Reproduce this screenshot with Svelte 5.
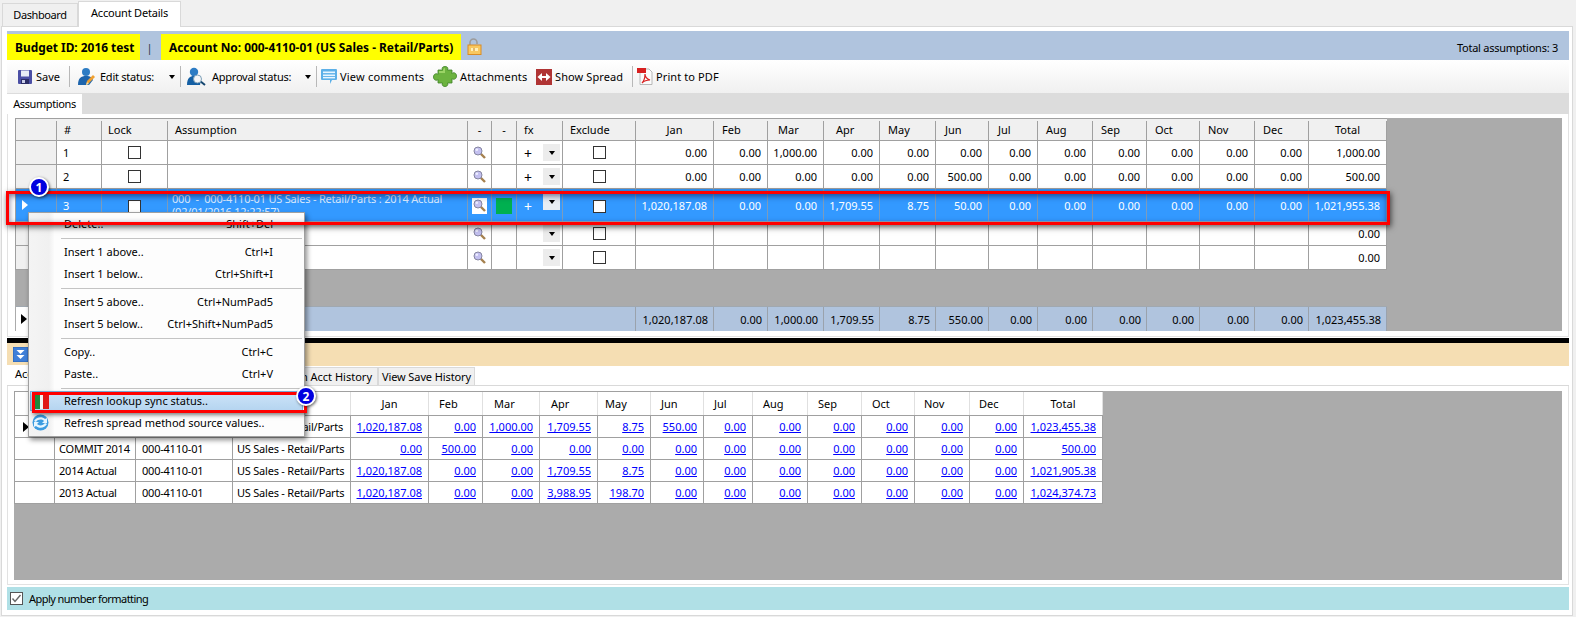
<script>
  const topCols = [41,45,66,300,24,25,46,73,78,54,56,56,56,53,49,55,54,53,55,54,78];
  const topTpl = topCols.map((w) => w + 'px').join(' ');
  const lowCols = [40,81,97,118,78,54,57,58,53,53,49,55,54,53,55,54,79];
  const lowTpl = lowCols.map((w) => w + 'px').join(' ');
  const months = [['Jan','c'],['Feb',''],['Mar','p10'],['Apr','p12'],['May',''],['Jun','p9'],['Jul','p9'],['Aug',''],['Sep',''],['Oct',''],['Nov',''],['Dec',''],['Total','c']];
  const lowMonths = [['Jan','c'],['Feb','p10'],['Mar','p11'],['Apr','p11'],['May','p7'],['Jun','p10'],['Jul','p10'],['Aug','p10'],['Sep','p10'],['Oct','p10'],['Nov','p9'],['Dec','p9'],['Total','c']];
  const z = (n) => Array(n).fill('0.00');
  const rows = [
    { n:'1', fx:true, vals:['0.00','0.00','1,000.00','0.00','0.00','0.00',...z(6),'1,000.00'] },
    { n:'2', fx:true, vals:['0.00','0.00','0.00','0.00','0.00','500.00',...z(6),'500.00'] },
    { n:'3', fx:true, sel:true, vals:['1,020,187.08','0.00','0.00','1,709.55','8.75','50.00',...z(6),'1,021,955.38'] },
    { n:'', fx:false, vals:[...Array(12).fill(''),'0.00'] },
    { n:'', fx:false, vals:[...Array(12).fill(''),'0.00'] }
  ];
  const foot = ['1,020,187.08','0.00','1,000.00','1,709.55','8.75','550.00',...z(6),'1,023,455.38'];
  const lowRows = [
    { a:'', b:'', c:'ail/Parts', cur:true, v:['1,020,187.08','0.00','1,000.00','1,709.55','8.75','550.00',...z(6),'1,023,455.38'] },
    { a:'COMMIT 2014', b:'000-4110-01', c:'US Sales - Retail/Parts', v:['0.00','500.00','0.00','0.00','0.00','0.00',...z(6),'500.00'] },
    { a:'2014 Actual', b:'000-4110-01', c:'US Sales - Retail/Parts', v:['1,020,187.08','0.00','0.00','1,709.55','8.75','0.00',...z(6),'1,021,905.38'] },
    { a:'2013 Actual', b:'000-4110-01', c:'US Sales - Retail/Parts', v:['1,020,187.08','0.00','0.00','3,988.95','198.70','0.00',...z(6),'1,024,374.73'] }
  ];
  const menu = [
    [['Delete..','Shift+Del']],
    [['Insert 1 above..','Ctrl+I'],['Insert 1 below..','Ctrl+Shift+I']],
    [['Insert 5 above..','Ctrl+NumPad5'],['Insert 5 below..','Ctrl+Shift+NumPad5']],
    [['Copy..','Ctrl+C'],['Paste..','Ctrl+V']]
  ];
</script>

{#snippet mag()}
  <svg class="mag" width="13" height="13" viewBox="0 0 13 13"><line x1="7.500" y1="7.500" x2="12" y2="12" stroke="#a5814f" stroke-width="2.400"/><circle cx="5" cy="5" r="4" fill="#c3c0f0" stroke="#85859f"/><circle cx="3.800" cy="3.800" r="1.300" fill="#eeeeff"/></svg>
{/snippet}
{#snippet chk()}<span class="chk"></span>{/snippet}
{#snippet dd()}<span class="dd"><i></i></span>{/snippet}
{#snippet arrow(c)}
  <svg class="rowarrow" width="6" height="10" viewBox="0 0 6 10"><path d="M0 0L6 5L0 10Z" fill={c}/></svg>
{/snippet}

<div class="root">
  <div class="tabs">
    <div class="tab">Dashboard</div>
    <div class="tab on">Account Details</div>
  </div>
  <div class="panel">
    <div class="head">
      <div class="yl y1">Budget ID: 2016 test</div>
      <span class="bar">|</span>
      <div class="yl y2">Account No: 000-4110-01 (US Sales - Retail/Parts)</div>
      <svg class="lock" width="15" height="17" viewBox="0 0 15 17"><path d="M3 8V4.500a3.500 3.500 0 0 1 7 0V6" fill="none" stroke="#9c9c9c" stroke-width="1.600"/><rect x="1" y="7" width="13" height="9.500" fill="#f8c860" stroke="#d98c24"/><rect x="4" y="10" width="7" height="3" fill="#fff0b8"/><rect x="6.500" y="10" width="1" height="3" fill="#c88020"/></svg>
      <div class="total">Total assumptions: 3</div>
    </div>
    <div class="toolbar">
      <div class="ti save">
        <svg width="14" height="14" viewBox="0 0 14 14"><rect width="14" height="14" rx="1" fill="#4b4fa5"/><rect x="3" y="0.500" width="8" height="6" fill="#e8ecf6"/><rect x="3" y="9" width="8" height="5" fill="#2b2d66"/><rect x="4" y="10" width="3" height="3" fill="#c8cce8"/></svg>
        <span>Save</span>
      </div>
      <span class="sep"></span>
      <div class="ti edit">
        <svg width="18" height="19" viewBox="0 0 18 19"><circle cx="9" cy="5" r="4" fill="#2d7cc4"/><path d="M1 18c0-7 3-9 8-9s6 2 7 4l-4 5z" fill="#1d64ac"/><path d="M9 18l1-4 6-6 2 2-6 6z" fill="#f0a030"/><path d="M9 18l1-3 2 2z" fill="#f8e0a0"/></svg>
        <span>Edit status:</span><i class="tri"></i>
      </div>
      <span class="sep"></span>
      <div class="ti appr">
        <svg width="19" height="19" viewBox="0 0 19 19"><circle cx="7" cy="5" r="4.200" fill="#2d7cc4"/><path d="M0 18c0-7 3-9 7-9s6 2 7 4l-1 5z" fill="#1560a4"/><line x1="13" y1="14" x2="18" y2="18" stroke="#14466f" stroke-width="2"/><circle cx="10.500" cy="12" r="4" fill="#f4f6f8" stroke="#7ea0b8"/></svg>
        <span>Approval status:</span><i class="tri"></i>
      </div>
      <span class="sep"></span>
      <div class="ti comm">
        <svg width="16" height="15" viewBox="0 0 16 15"><path d="M1 0h14a1 1 0 0 1 1 1v9a1 1 0 0 1-1 1h-4l-2 4v-4H1a1 1 0 0 1-1-1V1a1 1 0 0 1 1-1z" fill="#5cb0e8"/><rect x="2" y="2.500" width="12" height="1.600" fill="#e8f6ff"/><rect x="2" y="5.500" width="12" height="1.600" fill="#e8f6ff"/><rect x="2" y="8" width="12" height="1.400" fill="#e8f6ff"/></svg>
        <span>View comments</span>
      </div>
      <div class="ti att">
        <svg width="24" height="21" viewBox="0 0 24 21"><path d="M5 4h4.500c-1-2 0-3.500 2.500-3.500s3.500 1.500 2.500 3.500H19v3.500c1-1.500 4.500-1 4.500 2.500s-3.500 4-4.500 2.500V17h-4.500c1 2-.5 3.500-2.500 3.500s-3.500-1.500-2.500-3.500H5v-3.500c-1 1.500-4.500 1-4.500-2.500s3.500-4 4.500-2.500z" fill="#6cb33f" stroke="#3e8226" stroke-width=".800"/><path d="M6 5h4c0-2 1-3 2-3v5H6z" fill="#a8dc70" opacity=".8"/></svg>
        <span>Attachments</span>
      </div>
      <div class="ti spr">
        <svg width="16" height="16" viewBox="0 0 16 16"><rect width="16" height="16" fill="#b03434"/><path d="M1.500 8L6 4v8zM14.500 8L10 4v8z" fill="#fff"/><rect x="5" y="7" width="6" height="2" fill="#fff"/></svg>
        <span>Show Spread</span>
      </div>
      <span class="sep"></span>
      <div class="ti pdf">
        <svg width="16" height="17" viewBox="0 0 16 17"><path d="M3 1h9l3 3v12.500H3z" fill="#fbfbfb" stroke="#a8a8a8" stroke-width=".800"/><rect x="0" y="0" width="9" height="5" fill="#d82020"/><path d="M5 15c2-2 3-6 3-9 0 3 2 5 5 6-3 0-6 1-8 3z" fill="none" stroke="#d82020" stroke-width="1.200"/></svg>
        <span>Print to PDF</span>
      </div>
    </div>
    <div class="subtabs"><div class="subtab">Assumptions</div></div>

    <div class="upper">
      <div class="box">
        <div class="grid">
          <div class="gr ghead" style:grid-template-columns={topTpl}>
            <div class="c"></div><div class="c l6">#</div><div class="c l6b">Lock</div><div class="c l6">Assumption</div>
            <div class="c ctr">-</div><div class="c ctr">-</div><div class="c l6">fx</div><div class="c l6">Exclude</div>
            {#each months as [m, k]}<div class="c {k === 'c' ? 'ctr' : 'l8'} {k}">{m}</div>{/each}
          </div>
          {#each rows as r}
            <div class="gr grow" class:sel={r.sel} style:grid-template-columns={topTpl}>
              <div class="c rh">{#if r.sel}{@render arrow('#fff')}{/if}</div>
              <div class="c l5">{r.n}</div>
              <div class="c ctr">{#if r.n}{@render chk()}{/if}</div>
              <div class="c l4 asm">{#if r.sel}<div>000 &nbsp;- &nbsp;000-4110-01 US Sales - Retail/Parts : 2014 Actual<br>(02/01/2016 12:22:57)</div>{/if}</div>
              <div class="c ctr"><span class="magwrap">{@render mag()}</span></div>
              <div class="c ctr">{#if r.sel}<span class="green"></span>{/if}</div>
              <div class="c fx"><span class="plus">{r.fx ? '+' : ''}</span>{@render dd()}</div>
              <div class="c ctr">{@render chk()}</div>
              {#each r.vals as v}<div class="c num">{v}</div>{/each}
            </div>
          {/each}
        </div>
        <div class="gr gfoot" style:grid-template-columns={topTpl}>
          <div class="c frh">{@render arrow('#000')}</div>
          <div class="c fspan"></div>
          {#each foot as v}<div class="c num">{v}</div>{/each}
        </div>
      </div>
    </div>

    <div class="split"></div>
    <div class="tan">
      <svg class="collapse" width="15" height="15" viewBox="0 0 15 15"><rect width="15" height="15" fill="#3f7fd8" stroke="#2a62b0"/><path d="M3.500 3h8L7.500 7zM3.500 8h8l-4 4z" fill="#fff"/></svg>
    </div>
    <div class="lowtabs">
      <div class="lt act">Acc</div>
      <div class="lt wide"><span>n Acct History</span></div>
      <div class="lt vs">View Save History</div>
    </div>
    <div class="lower">
      <div class="box lowbox">
        <div class="lowgrid">
          <div class="gr lhead" style:grid-template-columns={lowTpl}>
            <div class="c"></div><div class="c"></div><div class="c"></div><div class="c"></div>
            {#each lowMonths as [m, k]}<div class="c {k === 'c' ? 'ctr' : ''} {k}">{m}</div>{/each}
          </div>
          {#each lowRows as r}
            <div class="gr lrow" style:grid-template-columns={lowTpl}>
              <div class="c lrh">{#if r.cur}{@render arrow('#000')}{/if}</div>
              <div class="c l4 tx">{r.a}</div><div class="c l5 tx">{r.b}</div><div class="c l4 tx" class:rgt={r.cur}>{r.c}</div>
              {#each r.v as v}<div class="c num"><a href="#top" class="lnk">{v}</a></div>{/each}
            </div>
          {/each}
        </div>
      </div>
    </div>
    <div class="teal">
      <svg width="13" height="13" viewBox="0 0 13 13"><rect x=".500" y=".500" width="12" height="12" fill="#fff" stroke="#555"/><path d="M2.500 6.500L5 9.500L10.500 3" fill="none" stroke="#666" stroke-width="1.400"/></svg>
      <span>Apply number formatting</span>
    </div>
  </div>

  <div class="menu">
    <div class="gutter"></div>
    {#each menu as group}
      {#each group as [a, b]}
        <div class="mi"><span>{a}</span><span>{b}</span></div>
      {/each}
      <div class="msep"></div>
    {/each}
    <div class="mi hot">
      <svg class="mic" width="14" height="15" viewBox="0 0 14 15"><rect width="5" height="15" fill="#1f8a3c"/><rect x="5" width="3" height="15" fill="#f4f4f4"/><rect x="8" width="6" height="15" fill="#e01818"/></svg>
      <span>Refresh lookup sync status..</span>
    </div>
    <div class="mi spreadm">
      <svg class="mic2" width="17" height="17" viewBox="0 0 17 17"><circle cx="8.500" cy="8.500" r="8" fill="#3c9ce0"/><path d="M2 7c2-4 8-5 11-2l2-1v5h-5l2-2c-2-2-6-2-8 1zM15 10c-2 4-8 5-11 2l-2 1V8h5L5 10c2 2 6 2 8-1z" fill="#e6f6ff"/></svg>
      <span>Refresh spread method source values..</span>
    </div>
  </div>
  <div class="rect r1"></div>
  <div class="rect r2"></div>
  <div class="badge b1">1</div>
  <div class="badge b2">2</div>
</div>

<style>
  :global(body) { margin: 0; }
  .root { position: relative; width: 1576px; height: 617px; background: #f0f0f0; overflow: hidden; font: 11px/13px "Noto Sans", Tahoma, sans-serif; color: #000; }
  .tabs { display: flex; height: 26px; padding-left: 2px; align-items: flex-end; }
  .tab { height: 23px; width: 76px; box-sizing: border-box; border: 1px solid #d9d9d9; border-bottom: 0; display: flex; align-items: center; justify-content: center; background: #f0f0f0; letter-spacing: -.4px; padding-bottom: 1px; }
  .tab.on { height: 26px; width: 103px; background: #fff; margin-bottom: -1px; position: relative; z-index: 1; padding-bottom: 4px; letter-spacing: -.2px; }
  .panel { box-sizing: border-box; margin-left: 1px; width: 1572px; height: 590px; border: 1px solid #d9d9d9; background: #fff; padding: 4px 3px 0 5px; }
  .head { height: 29px; background: #b0c4de; display: flex; align-items: flex-end; position: relative; }
  .yl { background: #ffff00; height: 26px; display: flex; align-items: center; font-weight: 700; font-size: 11.900px; box-sizing: border-box; padding-left: 8px; }
  .y1 { width: 133px; }
  .bar { width: 19px; margin-right: 2px; height: 26px; display: flex; align-items: center; justify-content: center; color: #334; }
  .y2 { width: 300px; }
  .lock { margin: 0 0 5px 6px; }
  .total { margin-left: auto; margin-right: 11px; height: 26px; display: flex; align-items: center; letter-spacing: -.25px; }
  .toolbar { height: 33px; display: flex; align-items: center; background: linear-gradient(#ffffff, #f0f0f0); }
  .ti { display: flex; align-items: center; flex: none; box-sizing: border-box; }
  .ti svg { flex: none; }
  .sep { width: 1px; height: 21px; background: #b8b8b8; flex: none; }
  .save { margin-left: 11px; width: 51px; gap: 4px; }
  .edit { margin-left: 7px; width: 103px; gap: 5px; padding-right: 5px; letter-spacing: -.25px; }
  .appr { margin-left: 6px; width: 129px; gap: 6px; padding-right: 5px; letter-spacing: -.25px; }
  .comm { margin-left: 4px; width: 112px; gap: 3px; letter-spacing: .2px; }
  .att { width: 103px; gap: 3px; letter-spacing: .15px; }
  .spr { width: 96px; gap: 3px; letter-spacing: .1px; }
  .pdf { margin-left: 4px; gap: 3px; letter-spacing: .1px; }
  .tri { margin-left: auto; width: 0; height: 0; border: 3.500px solid transparent; border-top: 4px solid #000; border-bottom: 0; }
  .subtabs { height: 21px; background: #dcdcdc; display: flex; align-items: flex-end; }
  .subtab { width: 75px; height: 20px; background: #fff; display: flex; align-items: center; justify-content: center; letter-spacing: -.4px; padding-bottom: 1px; box-sizing: border-box; }
  .upper { box-sizing: border-box; height: 223px; padding: 4px 7px 5px 8px; border: 1px solid #e2e2e2; border-top: 0; }
  .upper .box { margin-left: -1px; margin-right: -1px; }
  .box { background: #ababab; height: 213px; display: flex; flex-direction: column; align-items: flex-start; }
  .grid { box-sizing: border-box; border-left: 1px solid #a0a0a0; border-top: 1px solid #a0a0a0; }
  .gr { display: grid; }
  .c { box-sizing: border-box; border-right: 1px solid #a0a0a0; display: flex; align-items: center; white-space: nowrap; overflow: hidden; min-width: 0; }
  .ghead { height: 22px; background: #f0f0f0; border-bottom: 1px solid #a0a0a0; box-sizing: border-box; }
  .ghead .c { margin-top: 2px; padding-bottom: 2px; }
  .grow { height: 24px; background: #fff; border-bottom: 1px solid #a0a0a0; box-sizing: border-box; }
  .rh { background: #f0f0f0; padding-left: 6px; }
  .grow.sel { height: 33px; background: #3399ff; color: #fff; border-bottom-color: #9aa8b8; }
  .grow.sel .c { border-right-color: #7d9cbc; }
  .grow.sel .rh { background: #3399ff; }
  .asm { line-height: 13px; color: inherit; }
  .sel .asm { color: #dcecff; align-items: flex-start; padding-top: 3px; letter-spacing: -.2px; }
  .l4 { padding-left: 4px; } .l5 { padding-left: 6px; } .l6 { padding-left: 7px; } .l6b { padding-left: 6px; } .l8 { padding-left: 8px; }
  .p9 { padding-left: 9px; } .p10 { padding-left: 10px; } .p11 { padding-left: 11px; } .p12 { padding-left: 12px; } .p7 { padding-left: 7px; }
  .ctr { justify-content: center; }
  .num { justify-content: flex-end; padding-right: 6px; }
  .chk { display: block; width: 13px; height: 13px; box-sizing: border-box; border: 1px solid #333; background: #fff; }
  .sel .chk { margin-top: 2px; }
  .magwrap { display: flex; width: 15px; height: 16px; align-items: center; justify-content: center; }
  .sel .magwrap { background: #fff; margin-top: 1px; }
  .mag { display: block; }
  .green { display: block; width: 16px; height: 16px; background: #00b050; margin-top: 1px; }
  .fx { padding-left: 7px; gap: 0; position: relative; }
  .plus { display: block; width: 18px; font-size: 14px; margin-top: 2px; }
  .sel .plus { margin-top: 3px; }
  .dd { display: flex; width: 17px; height: 17px; background: #ececec; align-items: center; justify-content: center; margin-left: 1px; }
  .sel .dd { margin-top: -7px; background: #e8eef4; }
  .dd i { display: block; width: 0; height: 0; border: 3.500px solid transparent; border-top: 4px solid #000; border-bottom: 0; }
  .rowarrow { display: block; }
  .gfoot { margin-top: 36px; margin-left: 1px; height: 26px; background: #b0c4de; border-top: 1px solid #a0a8b0; box-sizing: border-box; }
  .gfoot .c { border-right-color: #9aa2ac; }
  .gfoot .num { padding-right: 5px; }
  .fspan { grid-column: span 7; }
  .frh { background: #fff; padding-left: 5px; }
  .split { margin-top: 1px; height: 5px; background: #000; }
  .tan { height: 23px; background: #f5deb3; padding-left: 6px; display: flex; align-items: center; }
  .collapse { display: block; }
  .lowtabs { height: 20px; display: flex; align-items: flex-end; box-sizing: border-box; border-bottom: 1px solid #d9d9d9; }
  .lt { height: 18px; box-sizing: border-box; display: flex; align-items: center; background: #f0f0f0; border: 1px solid #d9d9d9; border-bottom: 0; padding: 0 5px; justify-content: flex-end; white-space: nowrap; overflow: hidden; flex: none; }
  .lt.act { width: 100px; height: 20px; background: #fff; border-color: #fff; justify-content: flex-start; padding: 0 0 4px 7px; }
  .lt.wide { width: 271px; }
  .lt.vs { width: 97px; justify-content: center; letter-spacing: -.1px; }
  .lower { box-sizing: border-box; height: 199px; padding: 5px 6px 5px 7px; border: 1px solid #e2e2e2; border-top: 0; margin-top: 0; }
  .lowbox { height: 189px; margin-left: -1px; }
  .lowgrid { border-left: 1px solid #a0a0a0; border-top: 1px solid #a0a0a0; background: #fff; }
  .lhead { height: 24px; box-sizing: border-box; border-bottom: 1px solid #a0a0a0; }
  .lhead .c { border-right-color: #e0e0e0; }
  .lrow { height: 22px; box-sizing: border-box; border-bottom: 1px solid #a0a0a0; }
  .lrh { background: #fff; padding-left: 8px; }
  .tx { letter-spacing: -.22px; }
  .rgt { justify-content: flex-end; padding-right: 7px; }
  .lnk { color: #0000ff; text-decoration: underline; }
  .teal { margin-top: 2px; height: 23px; background: #b0e0e6; display: flex; align-items: center; padding-left: 3px; gap: 6px; letter-spacing: -.55px; }
  .teal span { margin-top: -1px; }
  .menu { position: absolute; left: 28px; top: 212px; width: 277px; height: 225px; box-sizing: border-box; border: 1px solid #a0a0a0; background: #fdfdfd; box-shadow: 2px 3px 5px rgba(0,0,0,.45); }
  .gutter { position: absolute; left: 0; top: 0; bottom: 0; width: 25px; background: linear-gradient(90deg, #f4f4f4, #f0f0f0 80%, #fbfbfb); }
  .mi { position: relative; height: 22px; display: flex; align-items: center; justify-content: space-between; padding: 0 31px 0 35px; box-sizing: border-box; padding-bottom: 1px; white-space: nowrap; }
  .msep { position: relative; height: 1px; margin: 3px 2px 2px 32px; background: #c4c4c4; }
  .mi.hot { justify-content: flex-start; background: linear-gradient(#cfe5f8, #b4d4f0); margin: 1px 1px 1px 1px; height: 20px; padding-left: 34px; box-shadow: inset 0 0 0 1px #7fb2e0; }
  .spreadm { justify-content: flex-start; }
  .mic { position: absolute; left: 5px; top: 3px; }
  .mic2 { position: absolute; left: 3px; top: 2px; }
  .rect { position: absolute; box-sizing: border-box; border: 3px solid #ff0000; box-shadow: 1px 2px 6px rgba(0,0,0,.65), inset 0 2px 6px rgba(0,0,60,.55); }
  .r1 { left: 6px; top: 191px; width: 1384px; height: 34px; }
  .r2 { left: 32px; top: 392px; width: 275px; height: 21px; box-shadow: 1px 2px 4px rgba(0,0,0,.5); }
  .badge { position: absolute; width: 20px; height: 20px; box-sizing: border-box; border: 2px solid #fff; border-radius: 50%; background: #0000e0; color: #fff; font-weight: 700; font-size: 12px; display: flex; align-items: center; justify-content: center; box-shadow: 1px 1px 3px rgba(0,0,0,.6); }
  .b1 { left: 29px; top: 177px; }
  .b2 { left: 296px; top: 386px; }
</style>
